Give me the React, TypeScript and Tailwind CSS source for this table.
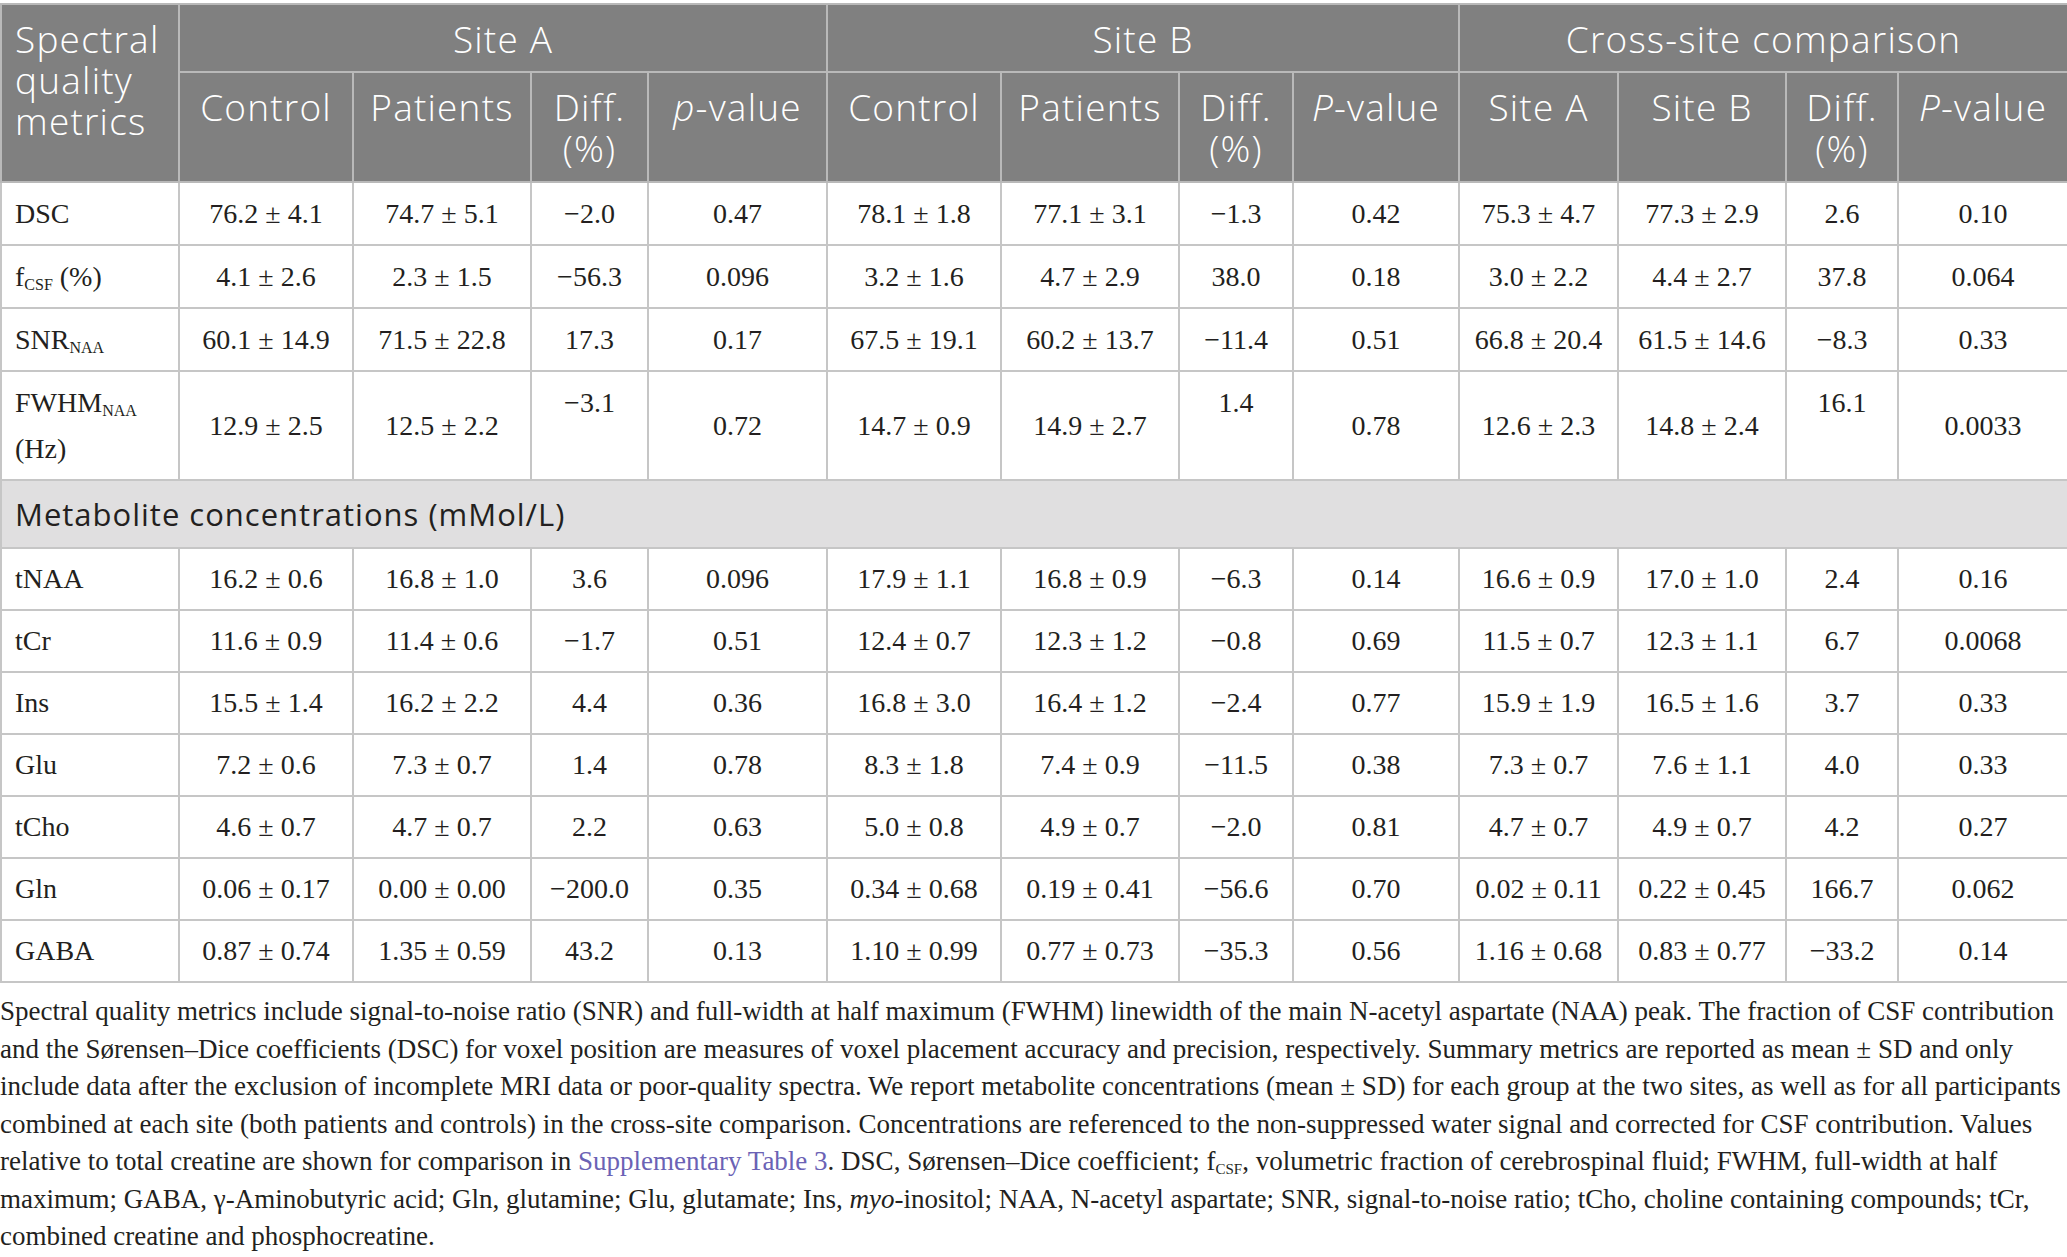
import React from 'react';

const head = "font-['Open_Sans',sans-serif] font-light text-white text-[37px] leading-[41px] tracking-[1.2px] border-2 border-[#b9b9b9] bg-[#808080]";
const cell = "border-2 border-[#c6c6c6] leading-[46px] text-center align-middle";

const Sub = ({ children }: { children: React.ReactNode }) => (
  <span className="relative top-[4px] text-[16px] leading-none">{children}</span>
);

type Row = { label: React.ReactNode; values: string[]; tall?: boolean };

const spectral: Row[] = [
  { label: 'DSC', values: ['76.2 ± 4.1', '74.7 ± 5.1', '−2.0', '0.47', '78.1 ± 1.8', '77.1 ± 3.1', '−1.3', '0.42', '75.3 ± 4.7', '77.3 ± 2.9', '2.6', '0.10'] },
  { label: <>f<Sub>CSF</Sub> (%)</>, values: ['4.1 ± 2.6', '2.3 ± 1.5', '−56.3', '0.096', '3.2 ± 1.6', '4.7 ± 2.9', '38.0', '0.18', '3.0 ± 2.2', '4.4 ± 2.7', '37.8', '0.064'] },
  { label: <>SNR<Sub>NAA</Sub></>, values: ['60.1 ± 14.9', '71.5 ± 22.8', '17.3', '0.17', '67.5 ± 19.1', '60.2 ± 13.7', '−11.4', '0.51', '66.8 ± 20.4', '61.5 ± 14.6', '−8.3', '0.33'] },
  { label: <>FWHM<Sub>NAA</Sub><br />(Hz)</>, tall: true, values: ['12.9 ± 2.5', '12.5 ± 2.2', '−3.1', '0.72', '14.7 ± 0.9', '14.9 ± 2.7', '1.4', '0.78', '12.6 ± 2.3', '14.8 ± 2.4', '16.1', '0.0033'] },
];

const metabolites: Row[] = [
  { label: 'tNAA', values: ['16.2 ± 0.6', '16.8 ± 1.0', '3.6', '0.096', '17.9 ± 1.1', '16.8 ± 0.9', '−6.3', '0.14', '16.6 ± 0.9', '17.0 ± 1.0', '2.4', '0.16'] },
  { label: 'tCr', values: ['11.6 ± 0.9', '11.4 ± 0.6', '−1.7', '0.51', '12.4 ± 0.7', '12.3 ± 1.2', '−0.8', '0.69', '11.5 ± 0.7', '12.3 ± 1.1', '6.7', '0.0068'] },
  { label: 'Ins', values: ['15.5 ± 1.4', '16.2 ± 2.2', '4.4', '0.36', '16.8 ± 3.0', '16.4 ± 1.2', '−2.4', '0.77', '15.9 ± 1.9', '16.5 ± 1.6', '3.7', '0.33'] },
  { label: 'Glu', values: ['7.2 ± 0.6', '7.3 ± 0.7', '1.4', '0.78', '8.3 ± 1.8', '7.4 ± 0.9', '−11.5', '0.38', '7.3 ± 0.7', '7.6 ± 1.1', '4.0', '0.33'] },
  { label: 'tCho', values: ['4.6 ± 0.7', '4.7 ± 0.7', '2.2', '0.63', '5.0 ± 0.8', '4.9 ± 0.7', '−2.0', '0.81', '4.7 ± 0.7', '4.9 ± 0.7', '4.2', '0.27'] },
  { label: 'Gln', values: ['0.06 ± 0.17', '0.00 ± 0.00', '−200.0', '0.35', '0.34 ± 0.68', '0.19 ± 0.41', '−56.6', '0.70', '0.02 ± 0.11', '0.22 ± 0.45', '166.7', '0.062'] },
  { label: 'GABA', values: ['0.87 ± 0.74', '1.35 ± 0.59', '43.2', '0.13', '1.10 ± 0.99', '0.77 ± 0.73', '−35.3', '0.56', '1.16 ± 0.68', '0.83 ± 0.77', '−33.2', '0.14'] },
];

const widths = [178, 174, 178, 117, 179, 174, 178, 114, 166, 159, 168, 112, 170];

const DataRow = ({ row, pad }: { row: Row; pad: string }) => (
  <tr>
    <td className={`border-2 border-[#c6c6c6] ${pad} pl-[13px] leading-[46px] text-left align-middle`}>{row.label}</td>
    {row.values.map((v, i) => (
      <td
        key={i}
        className={row.tall && i % 4 === 2 ? `border-2 border-[#c6c6c6] ${pad} leading-[46px] text-center align-top` : `${cell} ${pad}`}
      >
        {v}
      </td>
    ))}
  </tr>
);

const SubHead = ({ children }: { children: React.ReactNode }) => (
  <th className={`${head} pt-[13px] pb-[13px] text-center align-top`}>{children}</th>
);

export default function App() {
  return (
    <div className="w-[2067px] bg-white pt-[3px] font-['Liberation_Serif',serif] text-[#231f20]">
      <table className="w-[2067px] table-fixed border-collapse text-[28px]">
        <colgroup>
          {widths.map((w, i) => (
            <col key={i} style={{ width: w }} />
          ))}
        </colgroup>
        <thead>
          <tr>
            <th rowSpan={2} className={`${head} pt-[13px] pl-[13px] text-left align-top`}>
              Spectral
              <br />
              quality
              <br />
              metrics
            </th>
            <th colSpan={4} className={`${head} pt-[13px] pb-[12px] text-center`}>Site A</th>
            <th colSpan={4} className={`${head} pt-[13px] pb-[12px] text-center`}>Site B</th>
            <th colSpan={4} className={`${head} pt-[13px] pb-[12px] text-center`}>Cross-site comparison</th>
          </tr>
          <tr>
            <SubHead>Control</SubHead>
            <SubHead>Patients</SubHead>
            <SubHead>Diff.<br />(%)</SubHead>
            <SubHead><i>p</i>-value</SubHead>
            <SubHead>Control</SubHead>
            <SubHead>Patients</SubHead>
            <SubHead>Diff.<br />(%)</SubHead>
            <SubHead><i>P</i>-value</SubHead>
            <SubHead>Site A</SubHead>
            <SubHead>Site B</SubHead>
            <SubHead>Diff.<br />(%)</SubHead>
            <SubHead><i>P</i>-value</SubHead>
          </tr>
        </thead>
        <tbody>
          {spectral.map((r, i) => (
            <DataRow key={i} row={r} pad="pt-[8px] pb-[7px]" />
          ))}
          <tr>
            <td colSpan={13} className="border-2 border-[#c6c6c6] bg-[#e0dfe0] py-[13px] pl-[13px] font-['Open_Sans',sans-serif] text-[31px] leading-[40px] tracking-[1px] text-[#231f20]">
              Metabolite concentrations (mMol/L)
            </td>
          </tr>
          {metabolites.map((r, i) => (
            <DataRow key={i} row={r} pad="py-[7px]" />
          ))}
        </tbody>
      </table>
      <div className="mt-[10px] whitespace-nowrap text-[27px] leading-[37.5px] text-[#231f20]">
        <div>Spectral quality metrics include signal-to-noise ratio (SNR) and full-width at half maximum (FWHM) linewidth of the main N-acetyl aspartate (NAA) peak. The fraction of CSF contribution</div>
        <div>and the Sørensen–Dice coefficients (DSC) for voxel position are measures of voxel placement accuracy and precision, respectively. Summary metrics are reported as mean ± SD and only</div>
        <div>include data after the exclusion of incomplete MRI data or poor-quality spectra. We report metabolite concentrations (mean ± SD) for each group at the two sites, as well as for all participants</div>
        <div>combined at each site (both patients and controls) in the cross-site comparison. Concentrations are referenced to the non-suppressed water signal and corrected for CSF contribution. Values</div>
        <div>
          relative to total creatine are shown for comparison in <span className="text-[#6b62b5]">Supplementary Table 3</span>. DSC, Sørensen–Dice coefficient; f
          <span className="relative top-[4px] text-[15px] leading-none">CSF</span>, volumetric fraction of cerebrospinal fluid; FWHM, full-width at half
        </div>
        <div>
          maximum; GABA, γ-Aminobutyric acid; Gln, glutamine; Glu, glutamate; Ins, <i>myo</i>-inositol; NAA, N-acetyl aspartate; SNR, signal-to-noise ratio; tCho, choline containing compounds; tCr,
        </div>
        <div>combined creatine and phosphocreatine.</div>
      </div>
    </div>
  );
}
